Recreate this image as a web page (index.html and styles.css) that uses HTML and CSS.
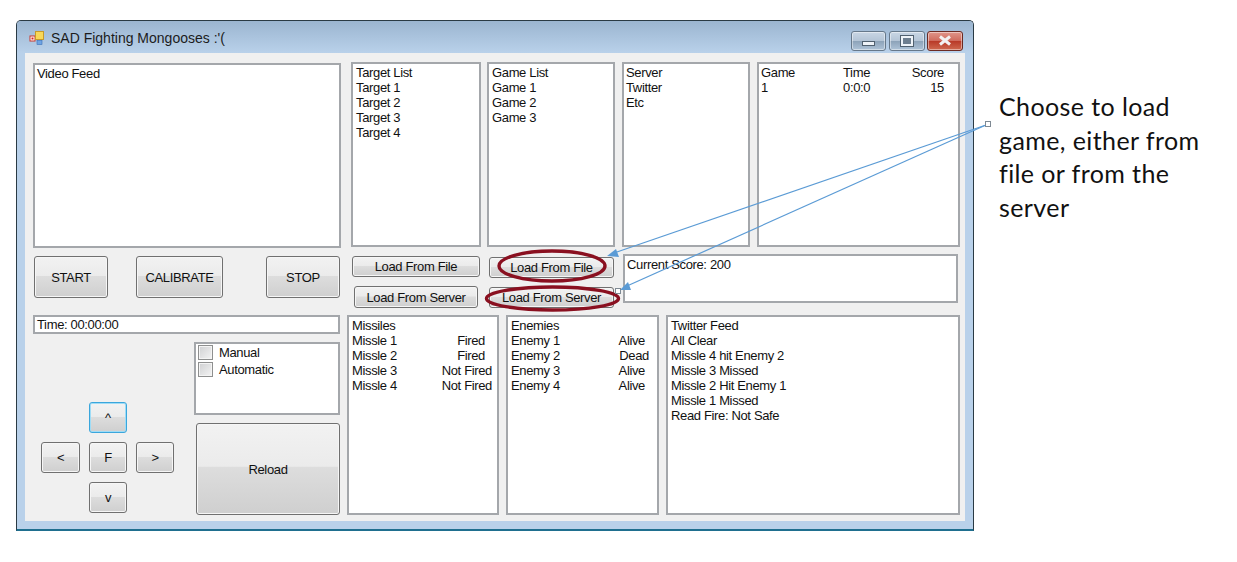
FILE: index.html
```html
<!DOCTYPE html>
<html lang="en">
<head>
  <meta charset="UTF-8">
  <title>SAD Fighting Mongooses</title>
  <link rel="stylesheet" href="styles.css">
</head>
<body>
  <div class="page">
    <div class="window">
      <div class="titlebar">
        <svg class="app-icon" width="16" height="16" viewBox="0 0 16 16">
          <rect x="1" y="6" width="5" height="5" fill="#fff" stroke="#c9362b"/>
          <rect x="2.5" y="7.5" width="2" height="2" fill="#d8261c"/>
          <rect x="6.5" y="1.5" width="8" height="8" fill="#f8d858" stroke="#c79a2a"/>
          <rect x="8" y="10.5" width="5" height="4" fill="#6ea4e4" stroke="#3a6fb5" stroke-width="0.6"/>
        </svg>
        <span class="title">SAD Fighting Mongooses :'(</span>
        <div class="caption-btns">
          <div class="cap cap-min"><span class="min-glyph"></span></div>
          <div class="cap cap-max"><span class="max-glyph"></span></div>
          <div class="cap cap-close">
            <svg width="16" height="11" viewBox="0 0 16 11"><path d="M3 1.5 L13 9.5 M13 1.5 L3 9.5" stroke="#f2f2f2" stroke-width="3"/></svg>
          </div>
        </div>
      </div>

      <div class="client">
        <div class="row row-top">
          <div class="box video">Video Feed</div>
          <div class="box target-list">Target List<br>Target 1<br>Target 2<br>Target 3<br>Target 4</div>
          <div class="box game-list">Game List<br>Game 1<br>Game 2<br>Game 3</div>
          <div class="box server-list">Server<br>Twitter<br>Etc</div>
          <div class="box score-list">
            <div class="score-row"><span>Game</span><span>Time</span><span class="right">Score</span></div>
            <div class="score-row"><span>1</span><span>0:0:0</span><span class="right">15</span></div>
          </div>
        </div>

        <div class="row row-mid">
          <div class="run-btns">
            <button class="btn btn-start">START</button>
            <button class="btn btn-cal">CALIBRATE</button>
            <button class="btn btn-stop">STOP</button>
          </div>
          <div class="load-col load-a">
            <button class="btn load-file">Load From File</button>
            <button class="btn load-server">Load From Server</button>
          </div>
          <div class="load-col load-b">
            <button class="btn load-file">Load From File</button>
            <button class="btn load-server">Load From Server</button>
          </div>
          <div class="box current-score">Current Score: 200</div>
        </div>

        <div class="row row-bottom">
          <div class="controls">
            <div class="box time-box">Time: 00:00:00</div>
            <div class="controls-body">
              <div class="dpad">
                <button class="btn pad pad-up focused">^</button>
                <button class="btn pad pad-left">&lt;</button>
                <button class="btn pad pad-fire">F</button>
                <button class="btn pad pad-right">&gt;</button>
                <button class="btn pad pad-down">v</button>
              </div>
              <div class="mode-col">
                <div class="box mode-box">
                  <label class="check"><span class="checkbox"></span>Manual</label>
                  <label class="check"><span class="checkbox"></span>Automatic</label>
                </div>
                <button class="btn reload">Reload</button>
              </div>
            </div>
          </div>
          <div class="box missiles">
            Missiles
            <div class="status-row"><span>Missle 1</span><span class="inset">Fired</span></div>
            <div class="status-row"><span>Missle 2</span><span class="inset">Fired</span></div>
            <div class="status-row"><span>Missle 3</span><span>Not Fired</span></div>
            <div class="status-row"><span>Missle 4</span><span>Not Fired</span></div>
          </div>
          <div class="box enemies">
            Enemies
            <div class="status-row"><span>Enemy 1</span><span class="inset">Alive</span></div>
            <div class="status-row"><span>Enemy 2</span><span>Dead</span></div>
            <div class="status-row"><span>Enemy 3</span><span class="inset">Alive</span></div>
            <div class="status-row"><span>Enemy 4</span><span class="inset">Alive</span></div>
          </div>
          <div class="box twitter">Twitter Feed<br>All Clear<br>Missle 4 hit Enemy 2<br>Missle 3 Missed<br>Missle 2 Hit Enemy 1<br>Missle 1 Missed<br>Read Fire: Not Safe</div>
        </div>
      </div>
    </div>

    <p class="note">Choose to load game, either from file or from the server</p>
  </div>

  <!-- callout shapes drawn over the screenshot -->
  <svg class="overlay" width="1237" height="562" viewBox="0 0 1237 562">
    <ellipse cx="552" cy="266" rx="53" ry="15" fill="none" stroke="#8a1020" stroke-width="3.4"/>
    <ellipse cx="552.5" cy="298.5" rx="66" ry="11.5" fill="none" stroke="#8a1020" stroke-width="3.4"/>
    <path d="M986 125 L614 253" stroke="#5b9bd5" stroke-width="1.2" fill="none"/>
    <path d="M986 125 L627 286" stroke="#5b9bd5" stroke-width="1.2" fill="none"/>
    <path d="M607 256 L616 249 L619 257 Z" fill="#5b9bd5"/>
    <path d="M620 290 L628 282 L631 290 Z" fill="#5b9bd5"/>
    <rect x="985.5" y="121.5" width="5" height="5" fill="#fff" stroke="#7f8a94"/>
    <rect x="615.5" y="288.5" width="5" height="5" fill="#fff" stroke="#7f8a94"/>
  </svg>
</body>
</html>
```

FILE: styles.css
```css
html, body {
  margin: 0;
  padding: 0;
  background: white;
  width: 100%;
  height: 100%;
  overflow: hidden;
}

body {
  position: relative;
  font-family: "Liberation Sans", Arial, sans-serif;
  font-size: 13px;
  letter-spacing: -0.35px;
  line-height: 15px;
  color: #111;
}

.page {
  display: flex;
  align-items: flex-start;
  padding: 20px 0 0 16px;
}

.overlay {
  position: absolute;
  top: 0;
  left: 0;
  pointer-events: none;
}

/* window frame */
.window {
  width: 958px;
  height: 511px;
  box-sizing: border-box;
  border: 1px solid #2a3a44;
  border-bottom: 2px solid #1f6f8f;
  border-radius: 5px 5px 0 0;
  background: #b9d1ea;
  padding: 0 8px 8px;
  flex-shrink: 0;
}

.titlebar {
  display: flex;
  align-items: center;
  height: 32px;
  margin: 0 -8px;
  padding: 2px 10px 0 12px;
  box-sizing: border-box;
  border-radius: 4px 4px 0 0;
  background: linear-gradient(#9bb5d0, #b9d1ea);
}

.app-icon {
  margin-right: 6px;
}

.title {
  font-size: 14px;
  letter-spacing: 0;
  color: #1c1c1c;
}

.caption-btns {
  display: flex;
  margin-left: auto;
  margin-top: 5px;
}

.cap {
  display: flex;
  align-items: center;
  justify-content: center;
  box-sizing: border-box;
  height: 20px;
  border: 1px solid #66788a;
  border-radius: 3px;
  box-shadow: inset 0 0 0 1px rgba(255, 255, 255, 0.45);
  background: linear-gradient(#c9d6e4 0, #b3c4d6 50%, #8da3b9 52%, #aec3d8 100%);
}

.cap-min { width: 35px; margin-right: 3px; }
.cap-max { width: 36px; margin-right: 2px; }

.cap-close {
  width: 36px;
  border-color: #6b2a22;
  background: linear-gradient(#e0968a 0, #cf6a5c 50%, #b93a28 52%, #cf6a50 100%);
}

.min-glyph {
  display: block;
  width: 11px;
  height: 3px;
  margin-top: 5px;
  background: #eef3f8;
  border: 1px solid #50606f;
}

.max-glyph {
  display: block;
  box-sizing: border-box;
  width: 12px;
  height: 10px;
  background: #6d7e8f;
  border: 2px solid #eef3f8;
  outline: 1px solid #50606f;
}

.client {
  height: 468px;
  box-sizing: border-box;
  background: #f0f0f0;
  padding: 9px 0 0 8px;
}

.row {
  display: flex;
}

.box {
  box-sizing: border-box;
  background: white;
  border: 2px solid #a4a7ab;
  padding: 1px 3px;
}

/* top row */
.row-top {
  height: 185px;
}

.video {
  width: 308px;
  height: 185px;
  margin-top: 1px;
  margin-right: 10px;
  padding-left: 2px;
}

.target-list {
  width: 130px;
  margin-right: 6px;
}

.game-list {
  width: 128px;
  margin-right: 7px;
}

.server-list {
  width: 128px;
  margin-right: 7px;
  padding-left: 2px;
}

.score-list {
  width: 203px;
  padding: 1px 14px 1px 2px;
}

.score-row {
  display: grid;
  grid-template-columns: 82px 1fr 50px;
}

.right {
  text-align: right;
}

/* buttons */
.btn {
  display: block;
  box-sizing: border-box;
  margin: 0;
  padding: 0;
  font-family: inherit;
  font-size: 13px;
  letter-spacing: -0.35px;
  line-height: 15px;
  color: #111;
  border: 1px solid #707070;
  border-radius: 3px;
  box-shadow: inset 0 0 0 1px #f6f6f6;
  background: linear-gradient(#f2f2f2 0, #ebebeb 47%, #dddddd 48%, #cfcfcf 100%);
}

/* middle row */
.row-mid {
  height: 54px;
  margin-top: 7px;
}

.run-btns {
  display: flex;
  width: 307px;
  margin-left: 1px;
  margin-top: 2px;
  align-items: flex-start;
}

.btn-start { width: 74px; height: 42px; }
.btn-cal { width: 87px; height: 42px; margin-left: 28px; }
.btn-stop { width: 74px; height: 42px; margin-left: 43px; }

.load-col {
  display: flex;
  flex-direction: column;
  margin-top: 2px;
}

.load-a {
  width: 128px;
  margin-left: 11px;
  align-items: center;
}

.load-b {
  width: 125px;
  margin-left: 9px;
  margin-top: 3px;
}

.load-file {
  width: 100%;
  height: 21px;
  margin-bottom: 9px;
}

.load-server {
  width: 124px;
  height: 22px;
}

.load-b .load-server {
  width: 125px;
  height: 21px;
}

.current-score {
  width: 335px;
  height: 49px;
  margin-left: 9px;
  padding-left: 2px;
}

/* bottom row */
.row-bottom {
  margin-top: 7px;
  height: 200px;
}

.controls {
  width: 307px;
  margin-right: 7px;
}

.time-box {
  height: 19px;
  padding: 0 2px;
}

.controls-body {
  display: flex;
}

.dpad {
  display: grid;
  grid-template-columns: 39px 38px 38px;
  grid-template-rows: 31px 31px 31px;
  column-gap: 9px;
  row-gap: 9px;
  margin: 68px 0 0 8px;
  height: 113px;
  width: 153px;
  flex-shrink: 0;
}

.pad-up { grid-column: 2; grid-row: 1; }
.pad-left { grid-column: 1; grid-row: 2; }
.pad-fire { grid-column: 2; grid-row: 2; }
.pad-right { grid-column: 3; grid-row: 2; }
.pad-down { grid-column: 2; grid-row: 3; }

.focused {
  border-color: #3aa6dc;
  box-shadow: inset 0 0 0 1px #9fdcf6;
}

.mode-col {
  width: 146px;
  margin-top: 8px;
  flex-shrink: 0;
}

.mode-box {
  height: 73px;
  padding: 0 2px;
}

.check {
  display: flex;
  align-items: center;
  height: 17px;
  gap: 6px;
}

.checkbox {
  box-sizing: border-box;
  width: 15px;
  height: 15px;
  border: 1px solid #8e8f8f;
  background: linear-gradient(135deg, #cfd0d2, #f4f4f4);
  box-shadow: inset 0 0 0 1px #f4f4f4;
}

.reload {
  width: 144px;
  height: 92px;
  margin: 8px 0 0 2px;
}

.missiles {
  width: 152px;
  margin-right: 7px;
}

.enemies {
  width: 153px;
  margin-right: 7px;
}

.twitter {
  width: 294px;
}

.status-row {
  display: flex;
  justify-content: space-between;
  padding-right: 2px;
}

.missiles .inset {
  margin-right: 7px;
}

.enemies .status-row {
  padding-right: 5px;
}

.enemies .inset {
  margin-right: 4px;
}

/* annotation */
.note {
  width: 215px;
  margin: 70px 0 0 25px;
  font-family: Lato, "Open Sans", sans-serif;
  font-size: 25px;
  letter-spacing: 0.4px;
  line-height: 33.5px;
  color: #111;
}
```
